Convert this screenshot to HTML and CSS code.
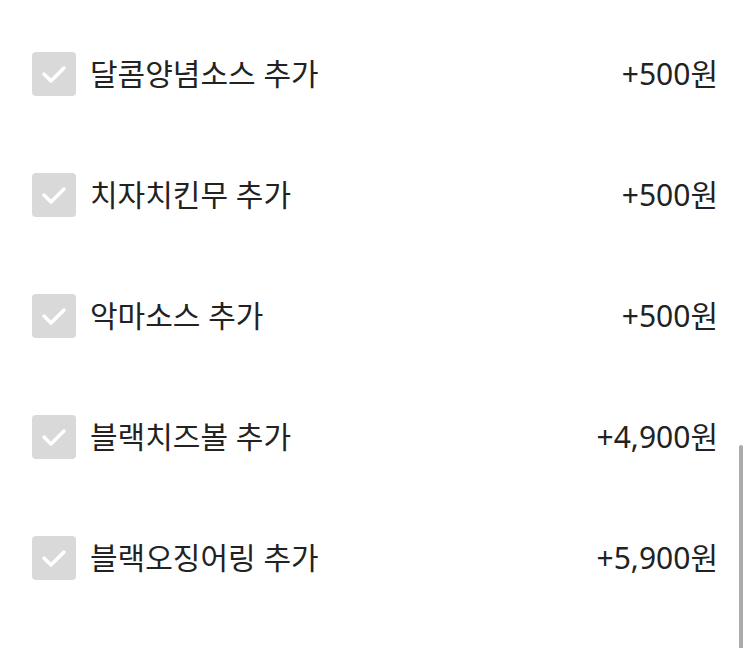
FILE: index.html
```html
<!DOCTYPE html>
<html lang="ko">
<head>
    <meta charset="UTF-8">
    <meta name="viewport" content="width=device-width, initial-scale=1.0">
    <title>추가 선택</title>
    <link rel="stylesheet" href="styles.css">
</head>
<body>

    <ul class="options">
        <li class="option">
            <span class="check"><svg viewBox="0 0 44 44"><polyline points="12,22 19,29 32,16"/></svg></span>
            <span class="name">달콤양념소스 추가</span>
            <span class="price">+500원</span>
        </li>
        <li class="option">
            <span class="check"><svg viewBox="0 0 44 44"><polyline points="12,22 19,29 32,16"/></svg></span>
            <span class="name">치자치킨무 추가</span>
            <span class="price">+500원</span>
        </li>
        <li class="option">
            <span class="check"><svg viewBox="0 0 44 44"><polyline points="12,22 19,29 32,16"/></svg></span>
            <span class="name">악마소스 추가</span>
            <span class="price">+500원</span>
        </li>
        <li class="option">
            <span class="check"><svg viewBox="0 0 44 44"><polyline points="12,22 19,29 32,16"/></svg></span>
            <span class="name">블랙치즈볼 추가</span>
            <span class="price">+4,900원</span>
        </li>
        <li class="option">
            <span class="check"><svg viewBox="0 0 44 44"><polyline points="12,22 19,29 32,16"/></svg></span>
            <span class="name">블랙오징어링 추가</span>
            <span class="price">+5,900원</span>
        </li>
    </ul>

    <div class="scrollbar"></div>

</body>
</html>
```

FILE: styles.css
```css
body {
    margin: 0;
    background: #fff;
    font-family: "Noto Sans", "Noto Sans CJK KR", sans-serif;
    color: #222;
    overflow: hidden;
}
.options {
    list-style: none;
    margin: 0;
    padding: 13px 32px 0;
}
.option {
    height: 121px;
    display: flex;
    align-items: center;
}
.check {
    width: 44px;
    height: 44px;
    flex: none;
    border-radius: 4px;
    background: #d9d9d9;
    margin-right: 14px;
}
.check svg {
    display: block;
    width: 44px;
    height: 44px;
}
.check polyline {
    fill: none;
    stroke: #fff;
    stroke-width: 3.5;
    stroke-linecap: round;
    stroke-linejoin: round;
}
.name {
    flex: 1;
    font-size: 30px;
    line-height: 40px;
}
.price {
    font-size: 30px;
    line-height: 40px;
}
.scrollbar {
    position: fixed;
    right: 7px;
    top: 445px;
    bottom: -10px;
    width: 4px;
    border-radius: 2px;
    background: #aaa;
}
```
